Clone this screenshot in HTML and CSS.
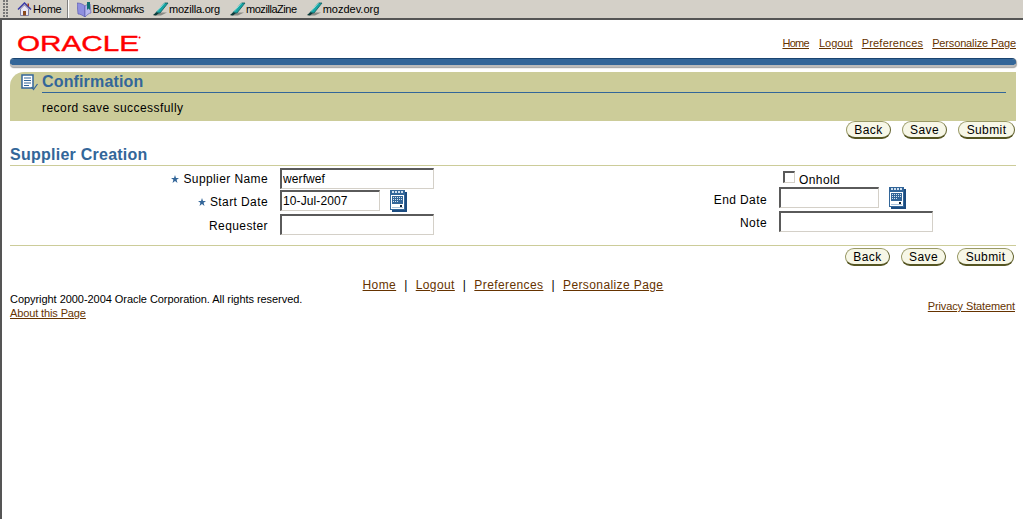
FILE: index.html
```html
<!DOCTYPE html>
<html lang="en">
<head>
<meta charset="utf-8">
<title>Supplier Creation</title>
<link rel="stylesheet" href="styles.css">
</head>
<body>
<svg class="defs" width="0" height="0" aria-hidden="true">
  <defs>
    <symbol id="pencil" viewBox="0 0 17 14">
      <path d="M1 13.500h8l6-3H7z" fill="#8a8a84"/>
      <path d="M4 10.500 12.500 1H16l-8 10z" fill="#16a6a6" stroke="#0b5c5c" stroke-width=".8"/>
      <path d="M1 13 4 10.500l3 .6-3 2.400z" fill="#0a3a3a"/>
      <path d="M12.500 1 5 9.500" stroke="#8fe5e0" stroke-width="1"/>
    </symbol>
    <symbol id="cal" viewBox="0 0 17 22">
      <path d="M2 2h15v20H2z" fill="#1c4c80"/>
      <path d="M0 0h15v20H0z" fill="#336699"/>
      <path d="M2 1h2v2H2zM5 1h2v2H5zM8 1h2v2H8zM11 1h2v2h-2z" fill="#cfe0f0"/>
      <path d="M1 5h13v14H1z" fill="#fff"/>
      <path d="M2 6h11v8H2z" fill="#336699"/>
      <path d="M3 7h1v1H3zM5 7h1v1H5zM7 7h1v1H7zM9 7h1v1H9zM11 7h1v1h-1zM3 9h1v1H3zM5 9h1v1H5zM7 9h1v1H7zM9 9h1v1H9zM11 9h1v1h-1zM3 11h1v1H3zM5 11h1v1H5zM7 11h1v1H7z" fill="#d5e3f0"/>
      <path d="M10 15h2v2h-2z" fill="#123"/>
      <path d="M2 17h11v1H2z" fill="#a9c3dc"/>
    </symbol>
    <symbol id="star" viewBox="0 0 8 8">
      <path d="M4 0 5 3h3L5.600 4.800 6.500 8 4 6 1.500 8 2.400 4.800 0 3h3z" fill="#336699"/>
    </symbol>
  </defs>
</svg>

<nav class="toolbar">
  <span class="grip"></span>
  <a class="tool tool-home">
    <svg class="tool-icon icon-home" viewBox="0 0 15 14">
      <path d="M1 7.500 7.500 1 14 7.500" fill="none" stroke="#3a3aa8" stroke-width="1.500"/>
      <path d="M3.500 7 7.500 3l4 4v6.500h-8z" fill="#e8e6f5" stroke="#6a6a9a" stroke-width=".8"/>
      <path d="M6 9h3v4.500H6z" fill="#8a4a20"/>
      <path d="M10.500 1.500h1.500V5l-1.500-1.500z" fill="#a03a20"/>
    </svg>
    Home
  </a>
  <span class="tool-sep"></span>
  <a class="tool tool-bm">
    <svg class="tool-icon icon-bm" viewBox="0 0 16 15">
      <path d="M0 1c3 0 6 1 8 3v11C5 13 3 12 1 12z" fill="#8f8fe0" stroke="#5050a8" stroke-width=".6"/>
      <path d="M8 4c1-1 3-2 5-2l1 9c-2 0-4 2-6 4z" fill="#b9b9f0" stroke="#5050a8" stroke-width=".6"/>
      <path d="M10 0h3v8l-1.500-1.500L10 8z" fill="#0f6f6f"/>
    </svg>
    Bookmarks
  </a>
  <a class="tool tool-link tool-org"><svg class="tool-icon icon-pencil"><use href="#pencil"/></svg>mozilla.org</a>
  <a class="tool tool-link tool-zine"><svg class="tool-icon icon-pencil"><use href="#pencil"/></svg>mozillaZine</a>
  <a class="tool tool-link"><svg class="tool-icon icon-pencil"><use href="#pencil"/></svg>mozdev.org</a>
</nav>

<main class="page">
  <header class="brand">
    <svg class="logo" viewBox="0 0 124 26" role="img" aria-label="ORACLE">
      <text class="logo-text" x="0" y="20" textLength="122" lengthAdjust="spacingAndGlyphs">ORACLE</text>
      <circle cx="122.500" cy="6.500" r="1" fill="#f00"/>
    </svg>
    <div class="global-links">
      <a class="link-home" href="#">Home</a><a href="#">Logout</a><a class="link-pref" href="#">Preferences</a><a class="link-pers" href="#">Personalize Page</a>
    </div>
  </header>
  <div class="brand-bar"></div>

  <section class="message">
    <div class="message-head">
      <svg class="message-icon" viewBox="0 0 17 17">
        <path d="M1 1h11v13H1z" fill="#fff" stroke="#336699" stroke-width="1.500"/>
        <path d="M3 4h7M3 6.500h7M3 9h7M3 11.500h5" stroke="#336699"/>
        <path d="M10.500 13l2 2.500L16.500 10" fill="none" stroke="#336699" stroke-width="1.200"/>
      </svg>
      <h2 class="message-title">Confirmation</h2>
    </div>
    <p class="message-text">record save successfully</p>
  </section>

  <div class="actions actions-top">
    <button class="btn btn-back">Back</button><button class="btn btn-save">Save</button><button class="btn btn-submit">Submit</button>
  </div>

  <h2 class="section-title">Supplier Creation</h2>

  <form class="form">
    <div class="col col-left">
      <div class="row row-1">
        <label class="label"><svg class="star"><use href="#star"/></svg>Supplier Name</label>
        <input class="field field-long" value="werfwef">
      </div>
      <div class="row row-2">
        <label class="label label-low"><svg class="star"><use href="#star"/></svg>Start Date</label>
        <span class="date-wrap"><input class="field field-short" value="10-Jul-2007"><svg class="cal"><use href="#cal"/></svg></span>
      </div>
      <div class="row row-3">
        <label class="label label-low">Requester</label>
        <input class="field field-long">
      </div>
    </div>
    <div class="col col-right">
      <div class="check-row">
        <input class="check" type="checkbox" id="onhold"><label class="check-label" for="onhold">Onhold</label>
      </div>
      <div class="row row-end">
        <label class="label label-lower">End Date</label>
        <span class="date-wrap"><input class="field field-short"><svg class="cal"><use href="#cal"/></svg></span>
      </div>
      <div class="row row-note">
        <label class="label label-low">Note</label>
        <input class="field field-long">
      </div>
    </div>
  </form>

  <div class="rule"></div>

  <div class="actions actions-bottom">
    <button class="btn btn-back">Back</button><button class="btn btn-save">Save</button><button class="btn btn-submit">Submit</button>
  </div>

  <div class="foot-links">
    <a href="#">Home</a><span>|</span><a href="#">Logout</a><span>|</span><a href="#">Preferences</a><span>|</span><a href="#">Personalize Page</a>
  </div>

  <footer class="foot">
    <div class="foot-left">
      <div class="copyright">Copyright 2000-2004 Oracle Corporation. All rights reserved.</div>
      <a class="small-link" href="#">About this Page</a>
    </div>
    <a class="small-link privacy" href="#">Privacy Statement</a>
  </footer>
</main>
</body>
</html>
```
FILE: styles.css
```css
* { box-sizing: border-box; }
html, body { margin: 0; height: 100%; }
body {
  font-family: "Liberation Sans", Arial, sans-serif;
  background: #fff;
  color: #000;
  overflow: hidden;
}
.defs { display: block; height: 0; }
a { color: #663300; }

.toolbar {
  display: flex;
  align-items: center;
  height: 20px;
  background: #d4d0c8;
  border-bottom: 2px solid #555;
  font-size: 11px;
  color: #000;
  padding-left: 3px;
}
.grip {
  width: 5px;
  height: 18px;
  background-image: radial-gradient(circle at 1px 1px, #777 1px, transparent 1px);
  background-size: 3px 3px;
  margin-right: 9px;
}
.tool { display: flex; align-items: center; white-space: nowrap; color: #000; }
.tool-icon { display: block; flex: none; }
.icon-home { width: 15px; height: 14px; margin-right: 1px; }
.icon-bm { width: 16px; height: 15px; }
.icon-pencil { width: 17px; height: 14px; }
.tool-home { margin-right: 5px; letter-spacing: -.2px; }
.tool-sep {
  width: 2px;
  height: 18px;
  background: #fff;
  border-left: 1px solid #808080;
  margin-right: 8px;
}
.tool-bm { margin-right: 8px; letter-spacing: -.4px; }
.tool-link { margin-right: 9px; }
.tool-org { letter-spacing: -.2px; }
.tool-zine { letter-spacing: -.45px; }

.page {
  border-left: 2px solid #555;
  height: 499px;
  padding: 0 7px 0 8px;
}

.brand {
  display: flex;
  justify-content: space-between;
  height: 38px;
}
.logo { width: 124px; height: 26px; margin: 11px 0 0 7px; display: block; overflow: visible; }
.logo-text {
  font-family: "Liberation Sans", Arial, sans-serif;
  font-size: 22px;
  fill: #f00;
  stroke: #f00;
  stroke-width: .4;
}
.global-links {
  display: flex;
  gap: 9px;
  font-size: 11px;
  padding-top: 17px;
}
.link-home { letter-spacing: -.7px; margin-right: 1px; }
.link-pref { letter-spacing: .2px; }
.link-pers { letter-spacing: -.15px; }
.brand-bar {
  height: 9px;
  background: #336699;
  border-top: 1px solid #1a4470;
  border-radius: 4px;
  box-shadow: 0 1px 1px #aaa, 1px 1px 1px #aaa;
  border-bottom: 2px solid #bbb;
  background-clip: padding-box;
}

.message {
  margin-top: 5px;
  height: 49px;
  background: #cccc99;
  border-top-left-radius: 14px;
  padding: 0 10px 0 32px;
}
.message-head {
  position: relative;
  border-bottom: 1px solid #336699;
  height: 21px;
}
.message-icon {
  position: absolute;
  left: -21px;
  top: 2px;
  width: 17px;
  height: 17px;
}
.message-title {
  margin: 0;
  font-size: 16px;
  line-height: 19px;
  color: #336699;
  font-weight: bold;
  letter-spacing: .15px;
}
.message-text {
  margin: 8px 0 0;
  font-size: 12px;
  line-height: 14px;
  letter-spacing: .45px;
}

.actions { display: flex; justify-content: flex-end; gap: 11px; height: 18px; }
.actions-top { padding-right: 1px; }
.actions-bottom { margin-top: 2px; padding-right: 2px; }
.btn {
  height: 18px;
  padding: 0;
  font: 12px/14px "Liberation Sans", Arial, sans-serif;
  letter-spacing: .4px;
  color: #000;
  background: #f7f7e7;
  border: 1px solid #999966;
  border-bottom: 2px solid #555522;
  border-right-color: #666633;
  border-radius: 9px;
}
.btn-back, .btn-save { width: 45px; }
.btn-submit { width: 57px; }

.section-title {
  margin: 6px 0 0;
  height: 21px;
  line-height: 19px;
  font-size: 16px;
  font-weight: bold;
  color: #336699;
  border-bottom: 1px solid #cccc99;
  letter-spacing: .25px;
}

.form { display: flex; height: 79px; padding-top: 2px; }
.col-left { width: 591px; }
.col { display: flex; flex-direction: column; }
.col-right { flex: 1; }
.row { display: flex; align-items: center; }
.label {
  display: block;
  flex: none;
  text-align: right;
  padding-right: 12px;
  font-size: 12px;
  letter-spacing: .4px;
  white-space: nowrap;
}
.label-low { padding-top: 2px; }
.label-lower { padding-top: 4px; }
.col-left .label { width: 270px; }
.col-right .label { width: 178px; }
.star { width: 8px; height: 8px; margin-right: 4px; }
.row-1 { height: 21px; }
.row-2 { height: 21px; margin-top: 1px; }
.row-3 { height: 21px; margin-top: 3px; }
.row-end { height: 21px; margin-top: 2px; }
.row-note { height: 21px; margin-top: 3px; }
.field {
  display: block;
  height: 21px;
  padding: 1px 1px;
  font: 12px "Liberation Sans", Arial, sans-serif;
  letter-spacing: .1px;
  color: #000;
  background: #fff;
  border-style: solid;
  border-width: 2px 1px 1px 2px;
  border-color: #5a5a5a #d4d0c8 #d4d0c8 #5a5a5a;
  outline: 0;
}
.field-long { width: 154px; }
.field-short { width: 100px; }
.date-wrap { display: flex; align-items: flex-start; }
.cal { width: 17px; height: 22px; margin-left: 10px; display: block; }
.check-row {
  display: flex;
  align-items: center;
  height: 17px;
  padding-left: 182px;
  font-size: 12px;
  letter-spacing: .4px;
}
.check-label { padding-top: 7px; }
.check {
  appearance: none;
  width: 12px;
  height: 12px;
  margin: 0 4px 0 0;
  background: #fff;
  border-style: solid;
  border-width: 2px 1px 1px 2px;
  border-color: #5a5a5a #d4d0c8 #d4d0c8 #5a5a5a;
}

.rule { height: 1px; background: #cccc99; }

.foot-links {
  display: flex;
  justify-content: center;
  gap: 8px;
  margin-top: 12px;
  font-size: 12px;
  line-height: 14px;
  letter-spacing: .4px;
}
.foot {
  display: flex;
  justify-content: space-between;
  align-items: flex-start;
  font-size: 11px;
  line-height: 14px;
}
.copyright { letter-spacing: -.05px; }
.copyright, .small-link { display: block; }
.small-link { letter-spacing: -.12px; }
.privacy { margin: 7px 1px 0 0; }
```
